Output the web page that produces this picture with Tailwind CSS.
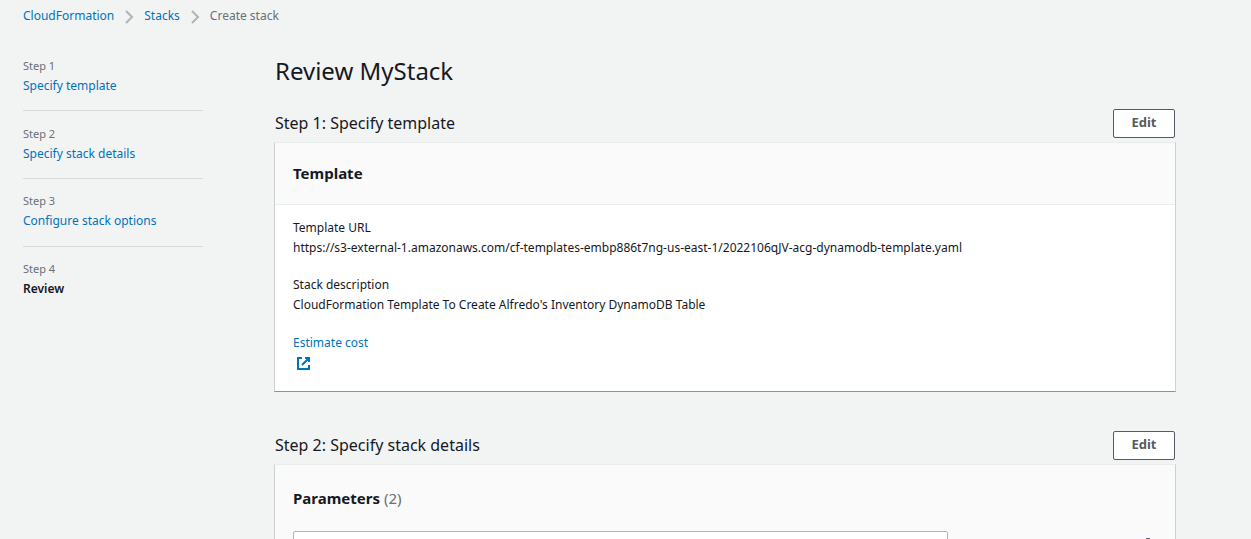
<!DOCTYPE html>
<html lang="en">
<head>
<meta charset="utf-8">
<meta name="viewport" content="width=device-width, initial-scale=1">
<title>CloudFormation - Create stack</title>
<script src="https://cdn.jsdelivr.net/npm/@tailwindcss/browser@4"></script>
</head>
<body class="h-screen overflow-hidden bg-[#f2f3f3] font-['Noto_Sans',sans-serif] text-[12px] leading-5 text-[#16191f]">
<nav aria-label="Breadcrumb" class="px-[23px] pt-[6px]">
  <ol class="flex items-center gap-[10px]">
    <li><a href="#" class="text-[#0073bb]">CloudFormation</a></li>
    <li aria-hidden="true"><svg class="mt-[2px] h-[14px] w-[10px]" viewBox="0 0 10 14" fill="none" stroke="#aab7b8" stroke-width="2"><path d="M2 1l6 6-6 6"/></svg></li>
    <li><a href="#" class="text-[#0073bb]">Stacks</a></li>
    <li aria-hidden="true"><svg class="mt-[2px] h-[14px] w-[10px]" viewBox="0 0 10 14" fill="none" stroke="#aab7b8" stroke-width="2"><path d="M2 1l6 6-6 6"/></svg></li>
    <li aria-current="page" class="text-[#687078]">Create stack</li>
  </ol>
</nav>
<div class="flex gap-[72px] pt-[30px] pr-[76px] pl-[23px]">
  <aside class="w-[180px] shrink-0">
    <ol class="divide-y divide-[#d5dbdb]">
      <li class="pb-[14px]"><p class="text-[11px] text-[#687078]">Step 1</p><a href="#" class="block text-[#0073bb]">Specify template</a></li>
      <li class="pt-[13px] pb-[14px]"><p class="text-[11px] text-[#687078]">Step 2</p><a href="#" class="block text-[#0073bb]">Specify stack details</a></li>
      <li class="pt-3 pb-[15px]"><p class="text-[11px] text-[#687078]">Step 3</p><a href="#" class="block text-[#0073bb]">Configure stack options</a></li>
      <li class="pt-3" aria-current="step"><p class="text-[11px] text-[#687078]">Step 4</p><p class="font-semibold">Review</p></li>
    </ol>
  </aside>
  <main class="min-w-0 flex-1">
    <h1 class="text-[24px] leading-[30px]">Review MyStack</h1>
    <section class="mt-[23px]">
      <div class="flex items-start justify-between">
        <h2 class="text-[16px] leading-7">Step 1: Specify template</h2>
        <button type="button" class="h-[29px] w-[62px] rounded-[2px] border border-[#545b64] bg-white pb-[3px] text-[13px] font-bold text-[#545b64]">Edit</button>
      </div>
      <div class="-mx-px mt-1 border border-t-[#eaeded] border-r-[#cdd1d2] border-b-[#879596] border-l-[#cdd1d2] bg-white">
        <div class="border-b border-[#eaeded] bg-[#fafafa] px-[18px] pt-5 pb-[21px]"><h3 class="text-[15px] font-bold">Template</h3></div>
        <dl class="px-[18px] pt-[13px]">
          <dt>Template URL</dt>
          <dd class="break-words">https://s3-external-1.amazonaws.com/cf-templates-embp886t7ng-us-east-1/2022106qJV-acg-dynamodb-template.yaml</dd>
          <dt class="mt-[17px]">Stack description</dt>
          <dd>CloudFormation Template To Create Alfredo's Inventory DynamoDB Table</dd>
        </dl>
        <a href="#" class="mx-[18px] mt-[18px] mb-5 block text-[#0073bb]">Estimate cost
          <svg class="mt-1 ml-1 block h-[14px] w-[14px]" viewBox="0 0 14 14" fill="none" stroke="#0073bb" stroke-width="2"><path d="M5 1H1v11h11V8M8 1h4v4M12 1L5 8"/></svg>
        </a>
      </div>
    </section>
    <section class="mt-[39px]">
      <div class="flex items-start justify-between">
        <h2 class="text-[16px] leading-7">Step 2: Specify stack details</h2>
        <button type="button" class="h-[29px] w-[62px] rounded-[2px] border border-[#545b64] bg-white pb-[3px] text-[13px] font-bold text-[#545b64]">Edit</button>
      </div>
      <div class="-mx-px mt-1 border border-x-[#cdd1d2] border-t-[#eaeded] border-b-[#879596] bg-[#fafafa] px-[18px] pt-[23px] pb-5">
        <h3 class="text-[15px] font-bold">Parameters <span class="font-normal text-[#687078]">(2)</span></h3>
        <div class="mt-[23px] flex items-start justify-between">
          <div class="relative w-[655px] max-w-[76%]">
            <input type="search" aria-label="Search parameters" class="block h-8 w-full rounded-[2px] border border-[#aab7b8] bg-white pr-3 pl-8">
            <svg class="absolute top-2 left-[11px] h-4 w-4" viewBox="0 0 16 16" fill="none" stroke="#687078" stroke-width="2"><circle cx="6" cy="6" r="5"/><path d="M10 10l5 5"/></svg>
          </div>
          <button type="button" aria-label="Preferences" class="mt-[6px] mr-px block"><svg class="h-4 w-4" viewBox="0 0 16 16" fill="none" stroke="#545b64" stroke-width="2"><path d="M7 2h2l1 2 2 1 2-.5 1 2-1.500 1.500v1l1.500 1.500-1 2-2-.5-2 1-1 2H7l-1-2-2-1-2 .5-1-2L2 9V8L.500 6.500l1-2 2 .5L6 4z"/><circle cx="8" cy="8" r="2"/></svg></button>
        </div>
      </div>
    </section>
  </main>
</div>
</body>
</html>
